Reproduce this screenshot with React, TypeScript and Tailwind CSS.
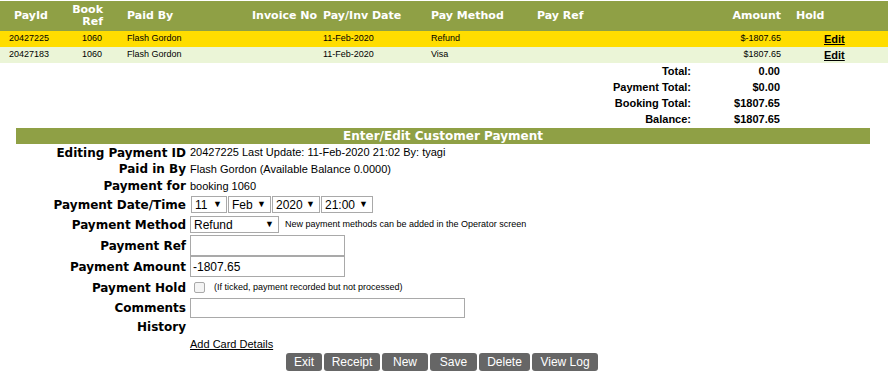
import React from "react";

const G = "bg-[#8fa045]";
const hdr = "font-['DejaVu_Sans',Verdana,sans-serif] font-bold text-[11px] text-white leading-[12px]";
const data = "font-['Liberation_Sans',Arial,sans-serif] text-[9px] text-black";

type Row = { id: string; book: string; by: string; date: string; method: string; amount: string; bg: string };
const rows: Row[] = [
  { id: "20427225", book: "1060", by: "Flash Gordon", date: "11-Feb-2020", method: "Refund", amount: "$-1807.65", bg: "bg-[#ffdd00]" },
  { id: "20427183", book: "1060", by: "Flash Gordon", date: "11-Feb-2020", method: "Visa", amount: "$1807.65", bg: "bg-[#ebf5d7]" },
];

const totals: [string, string][] = [
  ["Total:", "0.00"],
  ["Payment Total:", "$0.00"],
  ["Booking Total:", "$1807.65"],
  ["Balance:", "$1807.65"],
];

function Sel({ w, v }: { w: string; v: string }) {
  return (
    <div className={`${w} h-[17px] border border-[#a9a9a9] bg-white flex items-center justify-between pl-[3px] pr-[4px] text-[12px] leading-none text-black`}>
      <span>{v}</span>
      <span className="text-[9px]">▼</span>
    </div>
  );
}

const lbl = "font-['DejaVu_Sans',Verdana,sans-serif] font-bold text-[12px] text-black text-right w-[186px] shrink-0";
const val = "font-['Liberation_Sans',Arial,sans-serif] text-[11px] text-black";

function FRow({ label, h, children }: { label: string; h: string; children?: React.ReactNode }) {
  return (
    <div className={`flex items-center ${h}`}>
      <div className={lbl}>{label}</div>
      <div className={`pl-[4px] flex items-center ${val}`}>{children}</div>
    </div>
  );
}

export default function App() {
  return (
    <div className="w-[888px] h-[381px] bg-white overflow-hidden font-['Liberation_Sans',Arial,sans-serif]">
      <div className="h-[1px]" />
      <div className={`${G} flex h-[30px] items-center ${hdr}`}>
        <div className="w-[62px] text-center">PayId</div>
        <div className="w-[45px] text-right pr-[4px]">Book<br />Ref</div>
        <div className="w-[143px] pl-[20px]">Paid By</div>
        <div className="w-[70px] text-right pr-[3px]">Invoice No</div>
        <div className="w-[107px] pl-[3px]">Pay/Inv Date</div>
        <div className="w-[106px] pl-[4px]">Pay Method</div>
        <div className="w-[167px] pl-[4px]">Pay Ref</div>
        <div className="w-[85px] text-right pr-[4px]">Amount</div>
        <div className="w-[39px] pl-[11px]">Hold</div>
        <div className="flex-1" />
      </div>
      {rows.map((r) => (
        <div key={r.id} className={`${r.bg} flex h-[16px] items-center ${data}`}>
          <div className="w-[62px] pl-[9px]">{r.id}</div>
          <div className="w-[45px] text-right pr-[5px]">{r.book}</div>
          <div className="w-[143px] pl-[20px]">{r.by}</div>
          <div className="w-[70px]" />
          <div className="w-[107px] pl-[3px]">{r.date}</div>
          <div className="w-[106px] pl-[4px]">{r.method}</div>
          <div className="w-[167px]" />
          <div className="w-[85px] text-right pr-[4px]">{r.amount}</div>
          <div className="w-[39px]" />
          <div className="flex-1">
            <span className="font-bold underline text-[11px]">Edit</span>
          </div>
        </div>
      ))}
      <div>
        {totals.map(([l, v]) => (
          <div key={l} className="flex h-[16px] items-center font-bold text-[11px] text-black">
            <div className="w-[691px] text-right">{l}</div>
            <div className="w-[89px] text-right">{v}</div>
          </div>
        ))}
      </div>
      <div className={`${G} mt-[1px] ml-[16px] w-[854px] h-[16px] flex items-center justify-center font-['DejaVu_Sans',Verdana,sans-serif] font-bold text-[12px] text-white`}>
        Enter/Edit Customer Payment
      </div>
      <FRow label="Editing Payment ID" h="h-[17px]">20427225 Last Update: 11-Feb-2020 21:02 By: tyagi</FRow>
      <FRow label="Paid in By" h="h-[16px]">Flash Gordon (Available Balance 0.0000)</FRow>
      <FRow label="Payment for" h="h-[18px]">booking 1060</FRow>
      <FRow label="Payment Date/Time" h="h-[19px]">
        <div className="flex gap-[1px] ml-[1px]">
          <Sel w="w-[36px]" v="11" />
          <Sel w="w-[43px]" v="Feb" />
          <Sel w="w-[48px]" v="2020" />
          <Sel w="w-[52px]" v="21:00" />
        </div>
      </FRow>
      <FRow label="Payment Method" h="h-[21px]">
        <div className="flex items-center">
          <Sel w="w-[89px]" v="Refund" />
          <span className="ml-[6px] text-[9px]">New payment methods can be added in the Operator screen</span>
        </div>
      </FRow>
      <FRow label="Payment Ref" h="h-[21px]">
        <div className="w-[155px] h-[21px] border border-[#a9a9a9] bg-white" />
      </FRow>
      <FRow label="Payment Amount" h="h-[21px]">
        <div className="w-[155px] h-[21px] border border-[#a9a9a9] bg-white flex items-center pl-[2px] text-[12px]">-1807.65</div>
      </FRow>
      <FRow label="Payment Hold" h="h-[21px]">
        <div className="flex items-center">
          <div className="w-[11px] h-[11px] ml-[4px] border border-[#a9a9a9] rounded-[2px] bg-[#f4f4f4]" />
          <span className="ml-[9px] text-[9px]">(If ticked, payment recorded but not processed)</span>
        </div>
      </FRow>
      <FRow label="Comments" h="h-[20px]">
        <div className="w-[275px] h-[20px] border border-[#a9a9a9] bg-white" />
      </FRow>
      <FRow label="History" h="h-[18px]" />
      <div className="flex h-[16px] items-center">
        <div className="w-[190px]" />
        <span className="text-[11px] underline text-black">Add Card Details</span>
      </div>
      <div className="flex gap-[2px] mt-[1px] ml-[286px] text-[12px] text-white">
        {[
          ["Exit", "w-[36px]"],
          ["Receipt", "w-[56px]"],
          ["New", "w-[46px]"],
          ["Save", "w-[47px]"],
          ["Delete", "w-[51px]"],
          ["View Log", "w-[66px]"],
        ].map(([t, w]) => (
          <div key={t} className={`${w} h-[18px] bg-[#666666] rounded-[3px] flex items-center justify-center`}>{t}</div>
        ))}
      </div>
    </div>
  );
}
